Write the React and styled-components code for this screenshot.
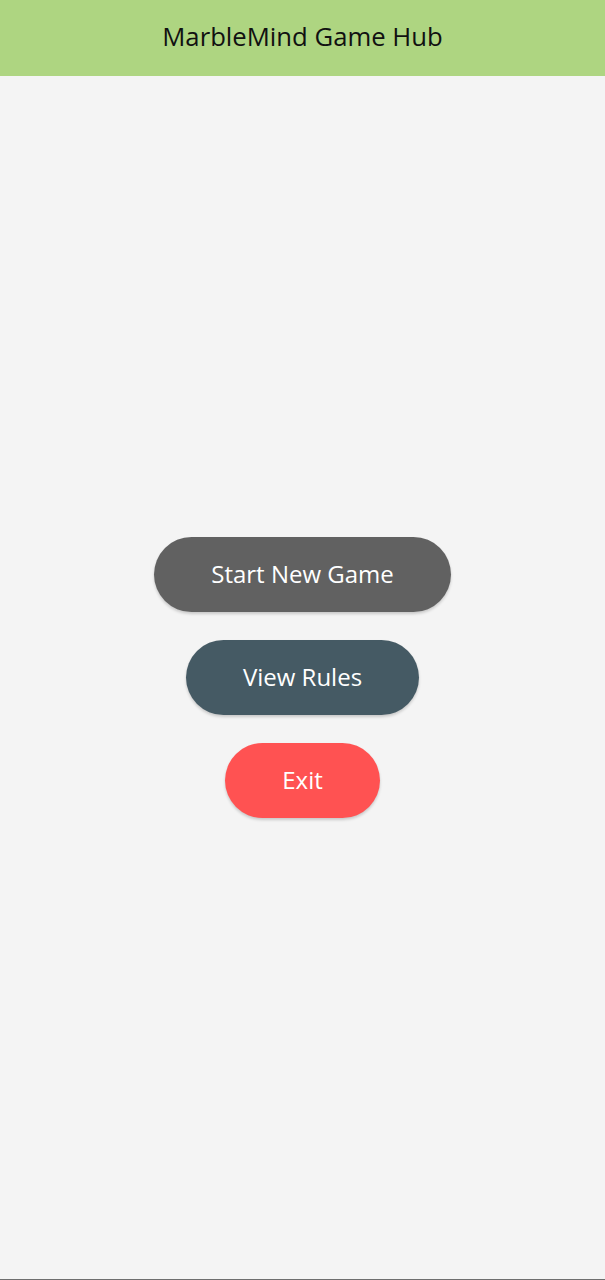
import React from 'react';
import styled, { createGlobalStyle } from 'styled-components';

const GlobalStyle = createGlobalStyle`
  html, body {
    margin: 0;
    padding: 0;
    background: #f4f4f4;
  }
  body {
    font-family: "Open Sans", "Noto Sans", sans-serif;
  }
`;

const Page = styled.div`
  display: flex;
  flex-direction: column;
  height: 1280px;
  background: #f4f4f4;
  border-bottom: 1px solid #6e6e6e;
  box-sizing: border-box;
`;

const Header = styled.header`
  height: 76px;
  flex-shrink: 0;
  background: #aed581;
  display: flex;
  align-items: center;
  justify-content: center;
`;

const Title = styled.h1`
  margin: 0 0 3px;
  font-size: 25.7px;
  font-weight: 400;
  color: #111;
`;

const Menu = styled.main`
  flex: 1;
  display: flex;
  flex-direction: column;
  align-items: center;
  justify-content: center;
  gap: 28px;
`;

const MenuButton = styled.button`
  height: 75px;
  padding: 0 57px 3px;
  border: none;
  border-radius: 38px;
  background: ${(p) => p.$bg};
  color: #fff;
  font-family: inherit;
  font-size: 24px;
  font-weight: 400;
  box-shadow: 0 2px 3px rgba(0, 0, 0, 0.18);
  cursor: pointer;
`;

const buttons = [
  { label: 'Start New Game', bg: '#616161' },
  { label: 'View Rules', bg: '#455a64' },
  { label: 'Exit', bg: '#ff5252' },
];

export default () => (
  <>
    <GlobalStyle />
    <Page>
      <Header>
        <Title>MarbleMind Game Hub</Title>
      </Header>
      <Menu>
        {buttons.map((b) => (
          <MenuButton key={b.label} $bg={b.bg}>
            {b.label}
          </MenuButton>
        ))}
      </Menu>
    </Page>
  </>
);
